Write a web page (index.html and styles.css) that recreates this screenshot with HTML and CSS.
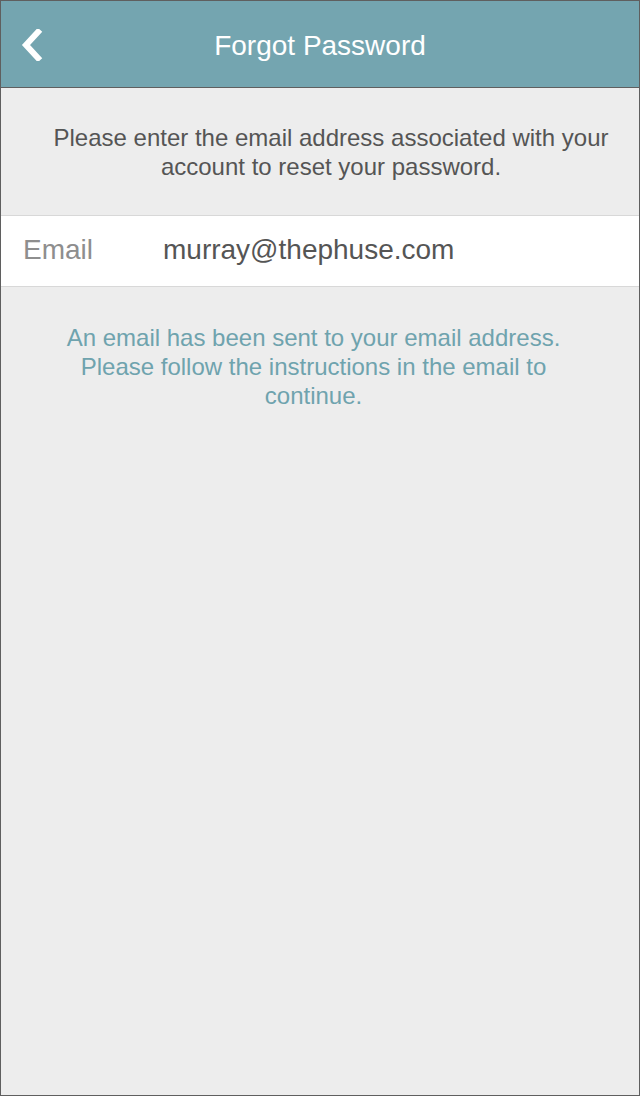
FILE: index.html
```html
<!DOCTYPE html>
<html>
<head>
<meta charset="utf-8">
<link rel="stylesheet" href="styles.css">
</head>
<body>
<div class="frame">
  <header class="topbar">
    <button class="back" aria-label="Back">
      <svg width="22" height="32" viewBox="0 0 22 32"><path d="M17 3 L5 16 L17 29" fill="none" stroke="#fff" stroke-width="6" stroke-linecap="square" stroke-linejoin="miter"/></svg>
    </button>
    <h1 class="title">Forgot Password</h1>
  </header>
  <main class="content">
    <p class="intro">Please enter the email address associated with your account to reset your password.</p>
    <div class="field">
      <span class="label">Email</span>
      <span class="value">murray@thephuse.com</span>
    </div>
    <p class="notice">An email has been sent to your email address. Please follow the instructions in the email to continue.</p>
  </main>
</div>
</body>
</html>
```
FILE: styles.css
```css
* { box-sizing: border-box; }
html, body { margin: 0; padding: 0; }
body {
  font-family: "Liberation Sans", Arial, sans-serif;
  background: #ededed;
}
.frame {
  width: 640px;
  height: 1096px;
  border: 1px solid #5f5f5f;
  background: #ededed;
  display: flex;
  flex-direction: column;
}
.topbar {
  height: 87px;
  flex: none;
  background: #74a5b0;
  border-bottom: 1px solid #5f5f5f;
  display: flex;
  align-items: center;
  justify-content: center;
  position: relative;
}
.back {
  position: absolute;
  left: 18px;
  top: 27px;
  background: none;
  border: 0;
  padding: 0;
  width: 26px;
  height: 34px;
  display: flex;
  align-items: center;
  justify-content: center;
}
.title {
  margin: 0;
  font-weight: normal;
  font-size: 28px;
  color: #fff;
  padding-top: 3px;
}
.content {
  display: flex;
  flex-direction: column;
}
.intro {
  margin: 35px 0 0;
  padding: 0 26px 0 48px;
  text-align: center;
  font-size: 24px;
  line-height: 29px;
  color: #555;
}
.field {
  margin-top: 34px;
  height: 72px;
  background: #fff;
  border-top: 1px solid #d8d8d8;
  border-bottom: 1px solid #d8d8d8;
  display: flex;
  align-items: center;
  font-size: 28px;
}
.label {
  width: 162px;
  padding-left: 22px;
  color: #8e8e8e;
  padding-bottom: 2px;
}
.value {
  color: #555;
  padding-bottom: 2px;
}
.notice {
  margin: 36px 0 0;
  padding: 0 71px 0 58px;
  text-align: center;
  font-size: 24px;
  line-height: 29px;
  color: #6fa3ae;
}
```
